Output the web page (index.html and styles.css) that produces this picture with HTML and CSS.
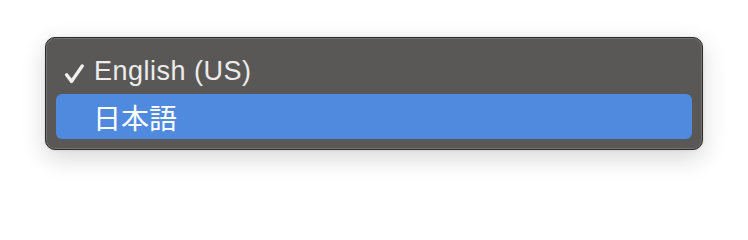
FILE: index.html
```html
<!DOCTYPE html>
<html lang="en">
<head>
<meta charset="utf-8">
<link rel="stylesheet" href="styles.css">
</head>
<body>
<div class="menu">
  <div class="item">
    <svg class="check" width="22" height="22" viewBox="0 0 22 22"><path d="M2.6 11.8 L7.6 18.4 L18.2 3" fill="none" stroke="#efefef" stroke-width="3.4" stroke-linecap="round" stroke-linejoin="round"/></svg>
    <span class="label">English (US)</span>
  </div>
  <div class="item selected">
    <span class="label ja">日本語</span>
  </div>
</div>
</body>
</html>
```
FILE: styles.css
```css
html, body {
  margin: 0;
  padding: 0;
  background: #ffffff;
}
body {
  width: 748px;
  height: 204px;
  overflow: hidden;
  padding-top: 37px;
  padding-left: 45px;
  box-sizing: border-box;
}
.menu {
  width: 658px;
  box-sizing: border-box;
  background: #5a5856;
  border: 1px solid #2c2c2c;
  border-radius: 10px;
  box-shadow: inset 0 0 0 1px rgba(255,255,255,0.16), 0 8px 24px rgba(0,0,0,0.16), 0 0 3px rgba(0,0,0,0.1);
  padding: 11px 10px 10px 10px;
  display: flex;
  flex-direction: column;
}
.item {
  height: 45px;
  display: flex;
  align-items: center;
  padding-left: 38px;
  position: relative;
  border-radius: 6px;
  color: #ececec;
  font-family: "Liberation Sans", Arial, sans-serif;
  font-size: 27px;
}
.item.selected {
  background: #4f8ade;
  color: #ffffff;
}
.check {
  position: absolute;
  left: 8px;
  top: 14px;
}
.label {
  line-height: 1;
  white-space: nowrap;
  margin-top: 0;
  letter-spacing: 0.5px;
}
.ja {
  font-family: "Noto Sans CJK JP", "Liberation Sans", sans-serif;
  font-size: 28px;
  margin-left: -1px;
  letter-spacing: 0;
}
```
